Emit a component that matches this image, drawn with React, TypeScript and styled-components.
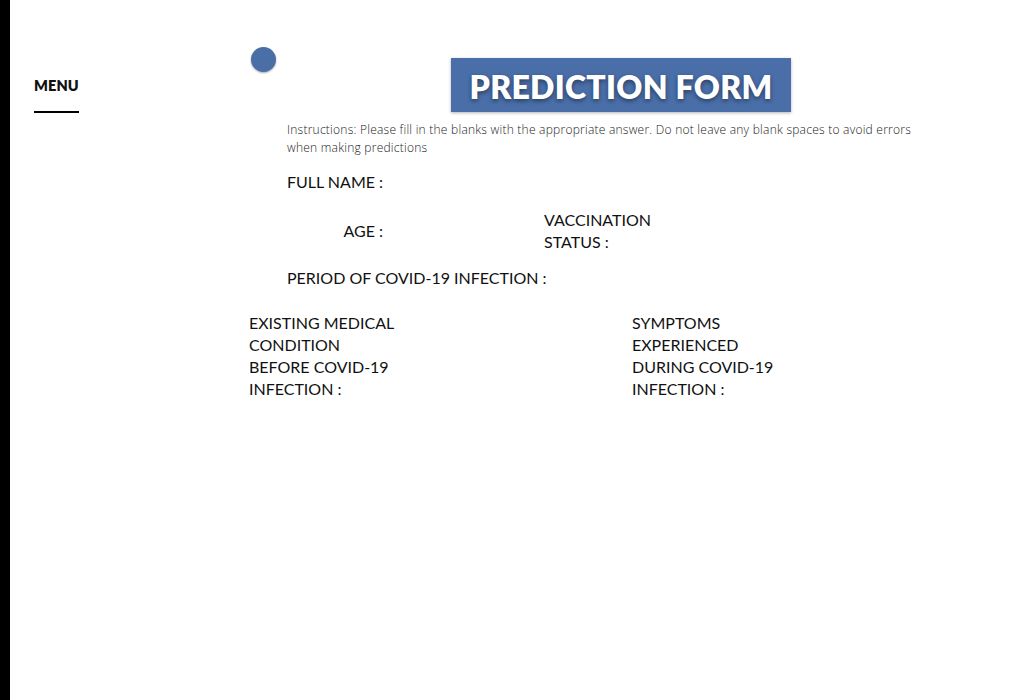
import React from "react";
import styled, { createGlobalStyle } from "styled-components";

const Global = createGlobalStyle`
  html, body { margin: 0; padding: 0; background: #fff; }
  body { font-family: Lato, "Open Sans", sans-serif; color: #111; }
`;

const Page = styled.div`
  display: flex;
  min-height: 700px;
`;

const Strip = styled.div`
  width: 10px;
  background: #000;
  flex-shrink: 0;
`;

const Sidebar = styled.nav`
  width: 239px;
  flex-shrink: 0;
  padding: 75px 0 0 24px;
  box-sizing: border-box;
`;

const MenuLabel = styled.div`
  display: inline-block;
  font-family: Lato, sans-serif;
  font-weight: 800;
  font-size: 14.5px;
  letter-spacing: 0.1px;
  padding-bottom: 17px;
  border-bottom: 2px solid #000;
`;

const Main = styled.main`
  flex: 1;
  padding-top: 47px;
`;

const Header = styled.div`
  display: flex;
  align-items: flex-start;
  padding-left: 2px;
`;

const Dot = styled.div`
  width: 25px;
  height: 25px;
  border-radius: 50%;
  background: #4a6ea6;
  box-shadow: 0 1px 2px rgba(0, 0, 0, 0.35);
`;

const TitleBox = styled.h1`
  margin: 11px 0 0 175px;
  width: 340px;
  height: 54px;
  box-sizing: border-box;
  padding-top: 3px;
  background: #4a6ea8;
  box-shadow: 0 1px 3px rgba(0, 0, 0, 0.3);
  color: #fff;
  font-family: Lato, sans-serif;
  font-weight: 800;
  font-size: 32px;
  display: flex;
  align-items: center;
  justify-content: center;
  text-shadow: 0 2px 4px rgba(0, 0, 0, 0.45);
  letter-spacing: 0.3px;
`;

const Instructions = styled.p`
  margin: 9px 0 0 38px;
  width: 634px;
  font-family: "Open Sans", sans-serif;
  font-size: 12px;
  font-weight: 300;
  letter-spacing: 0.24px;
  line-height: 18px;
  color: #222;
`;

const Row = styled.div<{ $indent: number; $top: number }>`
  display: flex;
  align-items: center;
  margin-left: ${(p) => p.$indent}px;
  margin-top: ${(p) => p.$top}px;
`;

const Label = styled.div<{ $width?: number; $right?: boolean }>`
  font-size: 16px;
  line-height: 22px;
  color: #111;
  width: ${(p) => (p.$width ? `${p.$width}px` : "auto")};
  text-align: ${(p) => (p.$right ? "right" : "left")};
  flex-shrink: 0;
`;

const Gap = styled.div<{ $w: number }>`
  width: ${(p) => p.$w}px;
  flex-shrink: 0;
`;

const TwoCol = styled.div`
  display: grid;
  grid-template-columns: 383px 160px;
  margin-top: 23px;
`;

export default function App() {
  return (
    <>
      <Global />
      <Page>
        <Strip />
        <Sidebar>
          <MenuLabel>MENU</MenuLabel>
        </Sidebar>
        <Main>
          <Header>
            <Dot />
            <TitleBox>PREDICTION FORM</TitleBox>
          </Header>
          <Instructions>
            Instructions: Please fill in the blanks with the appropriate answer. Do not leave any blank spaces to avoid errors when making predictions
          </Instructions>
          <Row $indent={38} $top={14}>
            <Label>FULL NAME :</Label>
          </Row>
          <Row $indent={38} $top={16}>
            <Label $width={96} $right>AGE :</Label>
            <Gap $w={161} />
            <Label $width={120}>
              VACCINATION
              <br />
              STATUS :
            </Label>
          </Row>
          <Row $indent={38} $top={14}>
            <Label>PERIOD OF COVID-19 INFECTION :</Label>
          </Row>
          <TwoCol>
            <Label $width={160}>
              EXISTING MEDICAL
              <br />
              CONDITION
              <br />
              BEFORE COVID-19
              <br />
              INFECTION :
            </Label>
            <Label $width={160}>
              SYMPTOMS
              <br />
              EXPERIENCED
              <br />
              DURING COVID-19
              <br />
              INFECTION :
            </Label>
          </TwoCol>
        </Main>
      </Page>
    </>
  );
}
